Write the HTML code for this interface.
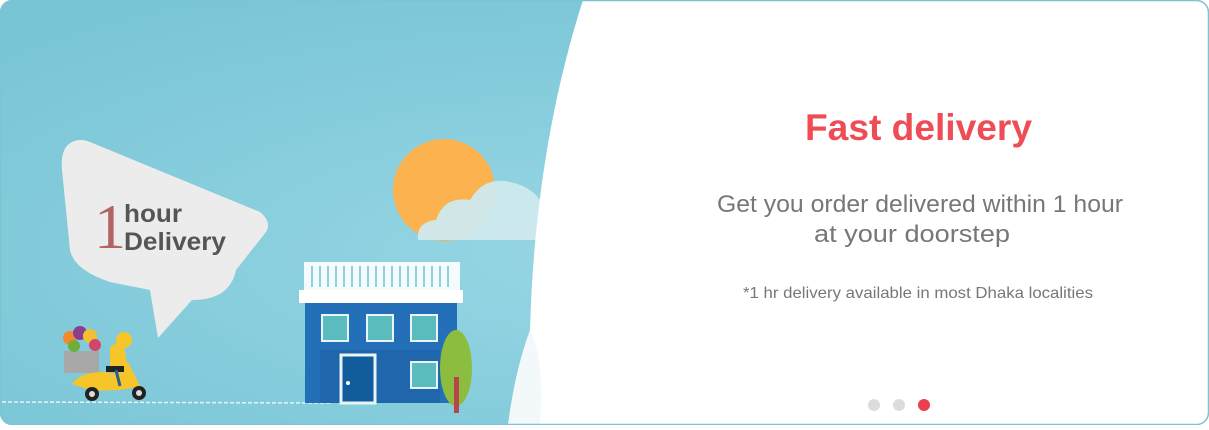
<!DOCTYPE html>
<html><head><meta charset="utf-8"><style>
html,body{margin:0;padding:0;background:#fff;}
body{width:1209px;height:425px;overflow:hidden;font-family:"Liberation Sans",sans-serif;}
</style></head><body>
<svg width="1209" height="425" viewBox="0 0 1209 425" xmlns="http://www.w3.org/2000/svg">
<defs>
<radialGradient id="bg" cx="0.5" cy="0.6" r="0.7">
<stop offset="0" stop-color="#97d6e4"/><stop offset="1" stop-color="#78c5d6"/>
</radialGradient>
<clipPath id="card"><rect x="0.5" y="0.5" width="1208" height="424" rx="12"/></clipPath>
</defs>
<g clip-path="url(#card)">
<rect width="1209" height="425" fill="url(#bg)"/>
<circle cx="444" cy="190" r="51" fill="#fbb24f"/>
<path d="M418 240 Q416 222 436 220 Q444 196 470 200 Q484 176 510 182 Q530 186 540 200 L560 200 L560 240 Z" fill="#cfe9ee" opacity="0.95"/>
<path d="M72 142 Q60 148 62 170 L70 250 Q74 270 110 282 L150 290 L158 338 L192 300 Q230 300 236 270 L266 232 Q272 222 260 212 L90 142 Q80 138 72 142 Z" fill="#ececec"/>
<text x="94" y="248" font-family="Liberation Serif,serif" font-size="64" fill="#b36462">1</text>
<text x="124" y="222" font-size="25" font-weight="bold" fill="#555" textLength="58" lengthAdjust="spacingAndGlyphs">hour</text>
<text x="124" y="250" font-size="25" font-weight="bold" fill="#555" textLength="102" lengthAdjust="spacingAndGlyphs">Delivery</text>
<line x1="2" y1="402" x2="330" y2="403" stroke="#e6f4f7" stroke-width="1.5" stroke-dasharray="4 2"/>
<rect x="64" y="351" width="35" height="22" fill="#a8a8a8"/>
<circle cx="70" cy="338" r="7" fill="#f28a2c"/><circle cx="80" cy="333" r="7" fill="#8a3e8f"/><circle cx="90" cy="336" r="7" fill="#f2c033"/><circle cx="74" cy="346" r="6" fill="#6fae3a"/><circle cx="95" cy="345" r="6" fill="#d5456a"/>
<path d="M110 348 Q116 340 124 346 L128 370 L110 372 Z" fill="#f5c52a"/>
<circle cx="124" cy="340" r="8" fill="#f5c52a"/>
<path d="M72 384 Q80 372 104 372 L118 374 L128 362 L140 386 Q120 392 90 390 Z" fill="#f5c52a"/>
<rect x="106" y="366" width="18" height="6" fill="#222"/>
<line x1="116" y1="370" x2="120" y2="386" stroke="#2f5d8c" stroke-width="3"/>
<circle cx="92" cy="394" r="7" fill="#222"/><circle cx="92" cy="394" r="3" fill="#ddd"/>
<circle cx="139" cy="393" r="7" fill="#222"/><circle cx="139" cy="393" r="3" fill="#ddd"/>
<rect x="304" y="262" width="156" height="30" fill="#fff" opacity="0.9"/>
<g stroke="#8fcfe0" stroke-width="2">
<line x1="312" y1="266" x2="312" y2="287"/><line x1="320" y1="266" x2="320" y2="287"/><line x1="328" y1="266" x2="328" y2="287"/><line x1="336" y1="266" x2="336" y2="287"/><line x1="344" y1="266" x2="344" y2="287"/><line x1="352" y1="266" x2="352" y2="287"/><line x1="360" y1="266" x2="360" y2="287"/><line x1="368" y1="266" x2="368" y2="287"/><line x1="376" y1="266" x2="376" y2="287"/><line x1="384" y1="266" x2="384" y2="287"/><line x1="392" y1="266" x2="392" y2="287"/><line x1="400" y1="266" x2="400" y2="287"/><line x1="408" y1="266" x2="408" y2="287"/><line x1="416" y1="266" x2="416" y2="287"/><line x1="424" y1="266" x2="424" y2="287"/><line x1="432" y1="266" x2="432" y2="287"/><line x1="440" y1="266" x2="440" y2="287"/><line x1="448" y1="266" x2="448" y2="287"/>
</g>
<rect x="299" y="290" width="164" height="13" fill="#fff"/>
<rect x="305" y="303" width="152" height="100" fill="#2470b8"/>
<rect x="320" y="350" width="120" height="53" fill="#2066ad"/>
<g fill="#5bbcbd" stroke="#e8f4f8" stroke-width="2">
<rect x="322" y="315" width="26" height="26"/><rect x="367" y="315" width="26" height="26"/><rect x="411" y="315" width="26" height="26"/><rect x="411" y="362" width="26" height="26"/>
</g>
<rect x="341" y="355" width="34" height="48" fill="#135c9c" stroke="#e8f4f8" stroke-width="3"/>
<circle cx="348" cy="383" r="2" fill="#fff"/>
<ellipse cx="456" cy="368" rx="16" ry="38" fill="#8cbd3f"/>
<rect x="454" y="377" width="5" height="36" fill="#b5474a"/>
<path d="M583 0 L1209 0 L1209 425 L508 425 Q518 370 530 330 Q535 150 583 0 Z" fill="#fff"/>
<path d="M530 330 Q545 360 540 425 L508 425 Q515 370 530 330 Z" fill="#f3f8fa"/>
</g>
<rect x="0.5" y="0.5" width="1208" height="424" rx="12" fill="none" stroke="#7ec3d2" stroke-width="1.5"/>
<text x="805" y="140" font-size="37" font-weight="bold" fill="#ef4d55" textLength="227" lengthAdjust="spacingAndGlyphs">Fast delivery</text>
<text x="717" y="212" font-size="24" fill="#777" textLength="406" lengthAdjust="spacingAndGlyphs">Get you order delivered within 1 hour</text>
<text x="814" y="242" font-size="24" fill="#777" textLength="196" lengthAdjust="spacingAndGlyphs">at your doorstep</text>
<text x="743" y="298" font-size="16" fill="#777" textLength="350" lengthAdjust="spacingAndGlyphs">*1 hr delivery available in most Dhaka localities</text>
<circle cx="874" cy="405" r="6" fill="#dcdcdc"/>
<circle cx="899" cy="405" r="6" fill="#dcdcdc"/>
<circle cx="924" cy="405" r="6" fill="#e8404e"/>
</svg>
</body></html>
